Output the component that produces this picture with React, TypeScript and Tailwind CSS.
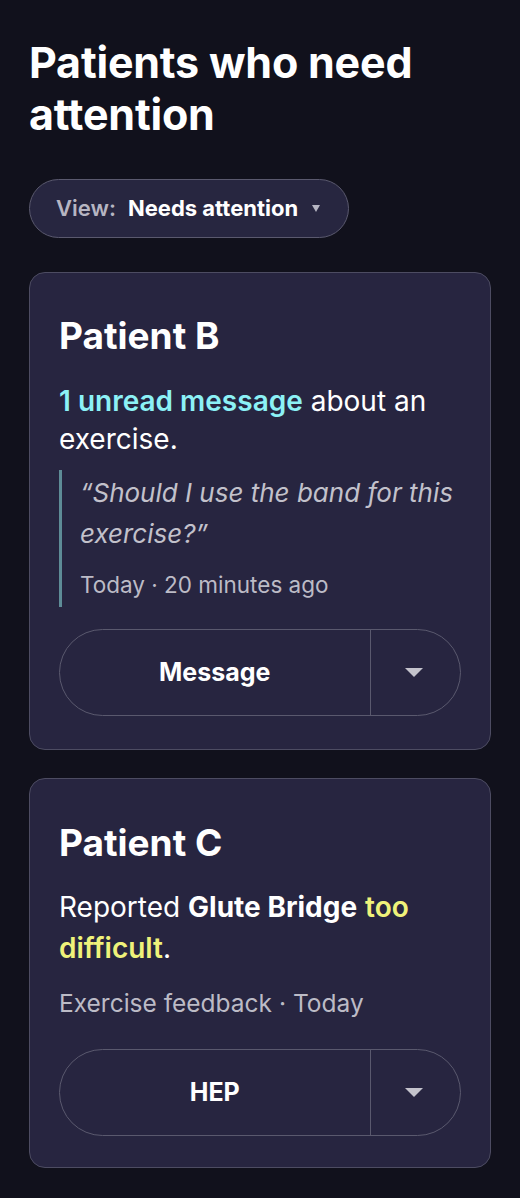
import React from "react";

function Caret() {
  return (
    <svg width="18" height="10" viewBox="0 0 18 10" className="block">
      <path d="M0 0 L18 0 L9 9 Z" fill="#c4c3cc" />
    </svg>
  );
}

function SplitButton({ label }: { label: string }) {
  return (
    <div className="flex h-[87px] w-full rounded-full border-[1.5px] border-[#5a596e]">
      <button className="flex flex-1 items-center justify-center text-[25px] font-bold text-white">
        {label}
      </button>
      <div className="w-[1.5px] bg-[#5a596e]" />
      <button className="flex w-[89px] items-center justify-center pr-[3px]">
        <Caret />
      </button>
    </div>
  );
}

export default function App() {
  return (
    <div
      className="min-h-[1198px] bg-[#11111c] px-[29px] pt-[36px] pb-[30px] text-white"
      style={{ fontFamily: "Inter, 'Noto Sans', sans-serif" }}
    >
      <h1 className="text-[43px] font-bold leading-[52px] tracking-[-0.2px]">
        Patients who need attention
      </h1>

      <button className="mt-[39px] flex h-[59px] items-center rounded-full border-[1.5px] border-[#5a596e] bg-[#272640] pl-[26px] pr-[28px] text-[22px]">
        <span className="font-semibold text-[#b6b5c2]">View:</span>
        <span className="ml-[12px] font-bold text-white">Needs attention</span>
        <svg width="8" height="7" viewBox="0 0 8 7" className="ml-[14px]">
          <path d="M0 0 L8 0 L4 7 Z" fill="#b6b5c2" />
        </svg>
      </button>

      <div className="mt-[34px] flex flex-col gap-[28px]">
        <div className="rounded-[16px] border-[1.5px] border-[#4d4c62] bg-[#272540] px-[29px] pt-[41px] pb-[33px]">
          <h2 className="text-[37px] font-bold leading-[44px]">Patient B</h2>
          <p className="mt-[24px] text-[28px] leading-[38px]">
            <span className="font-semibold text-[#8cf1f6]">1 unread message</span> about an exercise.
          </p>
          <div className="mt-[12px] border-l-[3px] border-[#5e8c97] pl-[18px] pt-[2px] pb-[4px]">
            <p className="text-[26px] italic leading-[41px] text-[#c2c1cb]">
              “Should I use the band for this exercise?”
            </p>
            <p className="mt-[13px] text-[22.5px] leading-[36px] text-[#bcbbc6]">
              Today · 20 minutes ago
            </p>
          </div>
          <div className="mt-[22px]">
            <SplitButton label="Message" />
          </div>
        </div>

        <div className="rounded-[16px] border-[1.5px] border-[#4d4c62] bg-[#272540] px-[29px] pt-[42px] pb-[31px]">
          <h2 className="text-[37px] font-bold leading-[44px]">Patient C</h2>
          <p className="mt-[22px] text-[28px] leading-[41px]">
            Reported <span className="font-bold">Glute Bridge</span>{" "}
            <span className="font-semibold text-[#eff27a]">too difficult</span>.
          </p>
          <p className="mt-[16px] text-[24.5px] leading-[36px] text-[#bcbbc6]">
            Exercise feedback · Today
          </p>
          <div className="mt-[28px]">
            <SplitButton label="HEP" />
          </div>
        </div>
      </div>
    </div>
  );
}
